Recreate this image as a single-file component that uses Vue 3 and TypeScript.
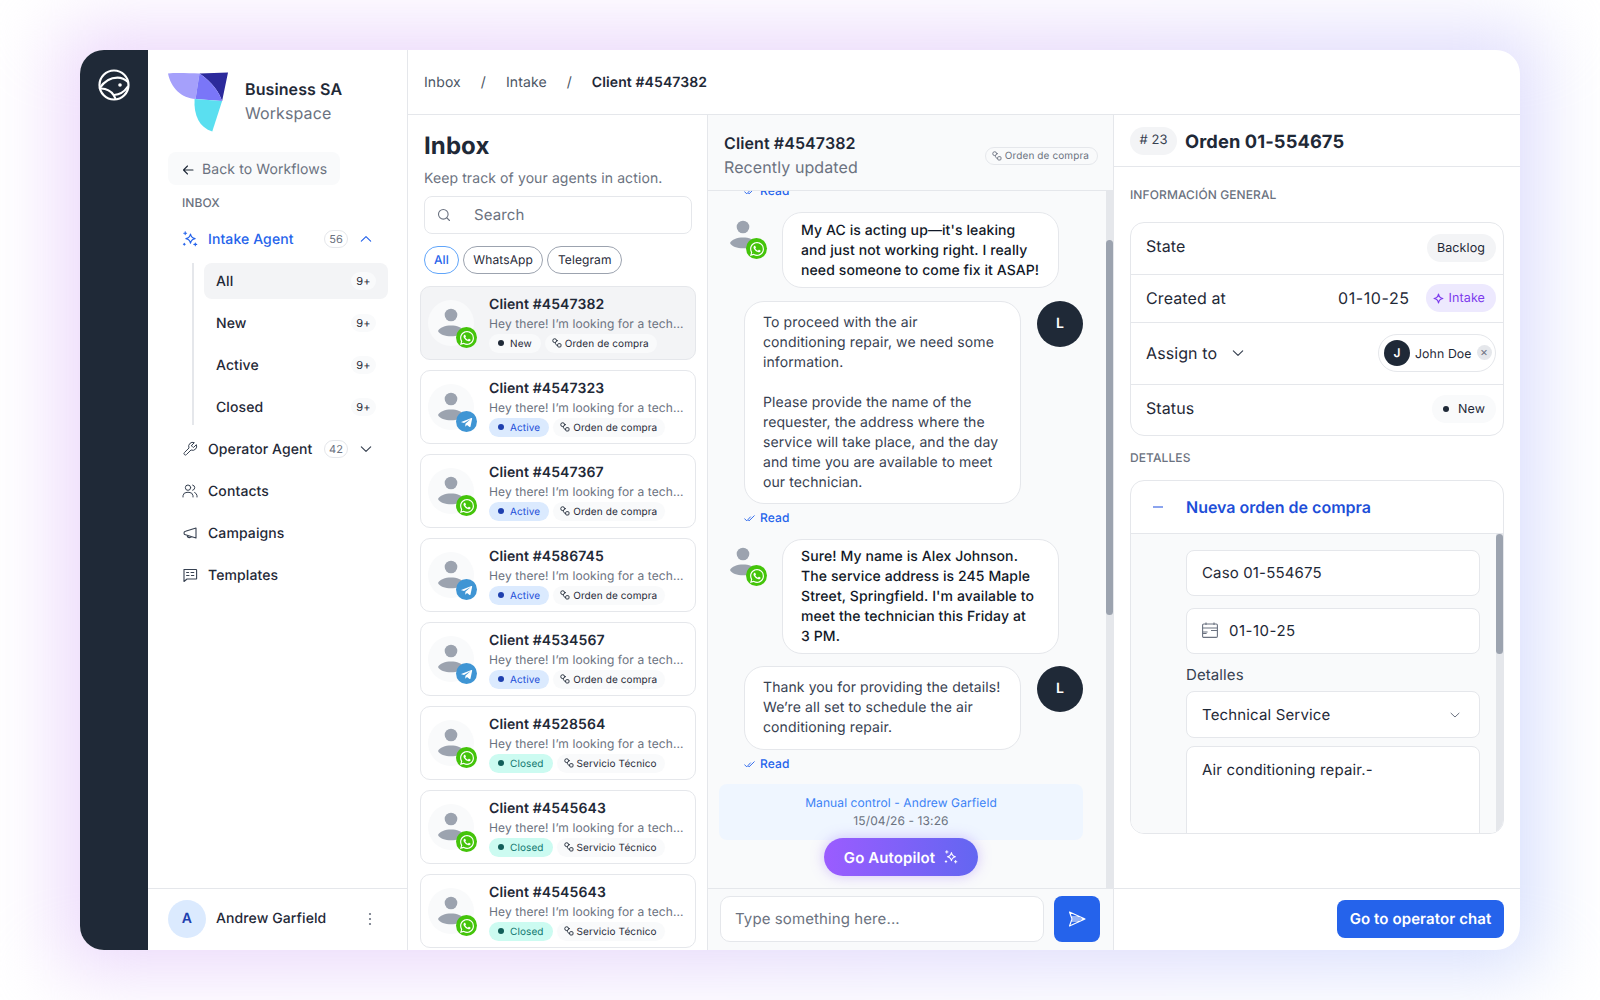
<template>
  <div class="page">
    <svg class="sprite" aria-hidden="true">
      <defs>
        <symbol id="i-wa" viewBox="0 0 24 24">
          <path fill="#fff" d="M17.472 14.382c-.297-.149-1.758-.867-2.03-.967-.273-.099-.471-.148-.67.15-.197.297-.767.966-.94 1.164-.173.199-.347.223-.644.075-.297-.15-1.255-.463-2.39-1.475-.883-.788-1.48-1.761-1.653-2.059-.173-.297-.018-.458.13-.606.134-.133.298-.347.446-.52.149-.174.198-.298.298-.497.099-.198.05-.371-.025-.52-.075-.149-.669-1.612-.916-2.207-.242-.579-.487-.5-.669-.51-.173-.008-.371-.01-.57-.01-.198 0-.52.074-.792.372-.272.297-1.04 1.016-1.04 2.479 0 1.462 1.065 2.875 1.213 3.074.149.198 2.096 3.2 5.077 4.487.709.306 1.262.489 1.694.625.712.227 1.36.195 1.871.118.571-.085 1.758-.719 2.006-1.413.248-.694.248-1.289.173-1.413-.074-.124-.272-.198-.57-.347m-5.421 7.403h-.004a9.87 9.87 0 01-5.031-1.378l-.361-.214-3.741.982.998-3.648-.235-.374a9.86 9.86 0 01-1.51-5.26c.001-5.45 4.436-9.884 9.888-9.884 2.64 0 5.122 1.03 6.988 2.898a9.825 9.825 0 012.893 6.994c-.003 5.45-4.437 9.884-9.885 9.884m8.413-18.297A11.815 11.815 0 0012.05 0C5.495 0 .16 5.335.157 11.892c0 2.096.547 4.142 1.588 5.945L.057 24l6.305-1.654a11.882 11.882 0 005.683 1.448h.005c6.554 0 11.89-5.335 11.893-11.893a11.821 11.821 0 00-3.48-8.413z" />
        </symbol>
        <symbol id="i-tg" viewBox="0 0 24 24">
          <path fill="#fff" d="M3.2 11.6 19.6 5.2c.8-.3 1.5.2 1.2 1.3L18 19.6c-.2 1-.8 1.2-1.6.8l-4.4-3.3-2.1 2.1c-.3.3-.5.4-.9.4l.3-4.5 8.2-7.4c.4-.3-.1-.5-.5-.2L6.900 13.900l-4.300-1.300c-.9-.3-.9-.7.6-1z" />
        </symbol>
        <symbol id="i-person" viewBox="0 0 46 46">
          <circle cx="23" cy="15" r="6.300" fill="#9ca3af" />
          <path fill="#9ca3af" d="M10 31c3-7.500 23-7.500 26 0-3 7-23 7-26 0z" />
        </symbol>
        <symbol id="i-flow" viewBox="0 0 12 12">
          <circle cx="3.200" cy="3.200" r="2.300" fill="none" stroke="currentColor" stroke-width="1.100" />
          <rect x="6.800" y="6.800" width="4" height="4" rx="1.200" fill="none" stroke="currentColor" stroke-width="1.100" />
          <path d="M5.400 3.200h1.800M4 5.400c0 2.200 1 3.400 2.800 3.400" fill="none" stroke="currentColor" stroke-width="1.100" />
        </symbol>
        <symbol id="i-spark" viewBox="0 0 16 16">
          <path d="M8.500 3c.5 2.800 1.800 4.100 4.600 4.600-2.800.5-4.100 1.800-4.600 4.600-.5-2.800-1.800-4.100-4.600-4.600 2.800-.5 4.100-1.800 4.600-4.600z" fill="none" stroke="currentColor" stroke-width="1.200" stroke-linejoin="round" />
          <path d="M3.200 .8v2.800M1.800 2.200h2.800M13.300 12v2.800M11.900 13.400h2.800M2.300 12.300v1.800M1.400 13.200h1.800" fill="none" stroke="currentColor" stroke-width="1.100" stroke-linecap="round" />
        </symbol>
        <symbol id="i-check" viewBox="0 0 12 12">
          <path d="M.700 6.300 3 8.600 7 4.300M5 8.200l.500.400L11.200 3" fill="none" stroke="currentColor" stroke-width="1" stroke-linecap="round" stroke-linejoin="round" />
        </symbol>
        <symbol id="i-chev" viewBox="0 0 12 12">
          <path d="M2 4.200 6 8l4-3.800" fill="none" stroke="currentColor" stroke-width="1" stroke-linecap="round" stroke-linejoin="round" />
        </symbol>
      </defs>
    </svg>

    <div class="frame">
      <aside class="rail">
        <svg class="rail__logo" viewBox="0 0 32 32" fill="none" stroke="#fff" stroke-width="2.200" stroke-linecap="round">
          <circle cx="16" cy="16" r="14.500" />
          <path d="M1.800 19C6.500 12 13 8.600 19.500 8.600c4 0 7.500 1.600 10.500 4.400" />
          <path d="M3 19.500c6 .2 10 2.500 12.500 6.500 1.500 2.400 2 3.500 2 4" />
          <path d="M16 26c6-.4 10.500-3.500 13.500-8" />
          <circle cx="22" cy="16" r="1.800" fill="#fff" stroke="none" />
        </svg>
      </aside>

      <aside class="side">
        <div class="brand">
          <svg class="brand__logo" viewBox="0 0 62 60">
            <path fill="#a5a0fb" d="M0 1C10 0 22 1 32 1L28 27C14 26 3 16 0 1z" />
            <path fill="#2c2a9c" d="M32 1 61 0 55 29C52 20 45 10 32 1z" />
            <path fill="#7a76f8" d="M32 1C45 10 52 20 55 29L28 27z" />
            <path fill="#5adff0" d="M27 27 55 29 45 60C32 56 26 44 27 27z" />
          </svg>
          <div class="brand__text">
            <div class="brand__name">Business SA</div>
            <div class="brand__sub">Workspace</div>
          </div>
        </div>

        <button class="back">
          <svg width="14" height="14" viewBox="0 0 14 14" fill="none" stroke="#1f2937" stroke-width="1.100" stroke-linecap="round" stroke-linejoin="round"><path d="M12 7H2.500M6.500 3 2.500 7l4 4" /></svg>
          Back to Workflows
        </button>
        <div class="side__label">INBOX</div>

        <div class="nav nav--on">
          <svg class="nav__icon"><use href="#i-spark" /></svg>
          <span>Intake Agent</span>
          <em class="nav__count">56</em>
          <svg class="nav__chev nav__chev--up"><use href="#i-chev" /></svg>
        </div>
        <div class="sub">
          <div v-for="s in subItems" :key="s" class="sub__row" :class="{ 'sub__row--on': s === 'All' }">
            {{ s }}<em>9+</em>
          </div>
        </div>
        <div class="nav">
          <svg class="nav__icon" viewBox="0 0 24 24" fill="none" stroke="currentColor" stroke-width="1.500" stroke-linecap="round" stroke-linejoin="round"><path d="M14.700 6.300a1 1 0 0 0 0 1.400l1.600 1.600a1 1 0 0 0 1.400 0l3.770-3.770a6 6 0 0 1-7.940 7.940l-6.910 6.910a2.120 2.120 0 0 1-3-3l6.910-6.910a6 6 0 0 1 7.940-7.940l-3.760 3.760z" /></svg>
          <span>Operator Agent</span>
          <em class="nav__count">42</em>
          <svg class="nav__chev"><use href="#i-chev" /></svg>
        </div>
        <div class="nav">
          <svg class="nav__icon" viewBox="0 0 24 24" fill="none" stroke="currentColor" stroke-width="1.500" stroke-linecap="round" stroke-linejoin="round"><circle cx="9" cy="7" r="4" /><path d="M1.500 21v-2a6 6 0 0 1 6-5h3a6 6 0 0 1 6 5v2M16 3.100a4 4 0 0 1 0 7.800M19 14.200a6 6 0 0 1 3.500 4.800v2" /></svg>
          <span>Contacts</span>
        </div>
        <div class="nav">
          <svg class="nav__icon" viewBox="0 0 16 16" fill="none" stroke="currentColor" stroke-width="1.100" stroke-linecap="round" stroke-linejoin="round"><path d="M14 3 3.500 6.200a1.800 1.800 0 0 0-1.500 1.800c0 1 .6 1.700 1.500 1.800L14 13V3zM5.200 10.300c0 1.500.8 2.300 2.200 2.300 1 0 1.500-.4 1.800-1" /></svg>
          <span>Campaigns</span>
        </div>
        <div class="nav">
          <svg class="nav__icon" viewBox="0 0 16 16" fill="none" stroke="currentColor" stroke-width="1.100" stroke-linecap="round" stroke-linejoin="round"><path d="M2 2.500h12a.6.6 0 0 1 .6.6v8.300a.6.6 0 0 1-.6.6H5l-3 2.500V3.100a.6.6 0 0 1 0-.6z" /><path d="M4.600 5.500h2M9 5.500h2.800M4.600 8.500h2.400M9.400 8.500h2.400" /></svg>
          <span>Templates</span>
        </div>

        <div class="me">
          <div class="me__avatar">A</div>
          <span class="me__name">Andrew Garfield</span>
          <svg class="me__dots" width="4" height="14" viewBox="0 0 4 14" fill="#6b7280"><circle cx="2" cy="2" r="1.100" /><circle cx="2" cy="7" r="1.100" /><circle cx="2" cy="12" r="1.100" /></svg>
        </div>
      </aside>

      <main class="main">
        <nav class="crumbs">
          <span>Inbox</span><i>/</i><span>Intake</span><i>/</i><b>Client #4547382</b>
        </nav>

        <div class="panes">
          <section class="inbox">
            <h1>Inbox</h1>
            <p>Keep track of your agents in action.</p>
            <div class="search">
              <svg width="14" height="14" viewBox="0 0 14 14" fill="none" stroke="#6b7280" stroke-width="1.100" stroke-linecap="round"><circle cx="6.300" cy="6.300" r="4.800" /><path d="m10 10 2.500 2.500" /></svg>
              <span>Search</span>
            </div>
            <div class="chips">
              <span class="chip chip--on">All</span>
              <span class="chip">WhatsApp</span>
              <span class="chip">Telegram</span>
            </div>
            <div class="cards">
              <article v-for="(c, i) in clients" :key="i" class="card" :class="{ 'card--on': i === 0 }">
                <div class="who who--bg">
                  <svg class="who__person"><use href="#i-person" /></svg>
                  <span class="who__badge" :class="`who__badge--${c.channel}`">
                    <svg><use :href="`#i-${c.channel}`" /></svg>
                  </span>
                </div>
                <div class="card__body">
                  <div class="card__title">Client #{{ c.id }}</div>
                  <div class="card__text">Hey there! I’m looking for a tech...</div>
                  <div class="card__tags">
                    <span class="tag" :class="`tag--${c.status.toLowerCase()}`"><i />{{ c.status }}</span>
                    <span class="tag tag--flow"><svg><use href="#i-flow" /></svg>{{ c.kind }}</span>
                  </div>
                </div>
              </article>
            </div>
          </section>

          <section class="chat">
            <header class="chat__head">
              <div>
                <h2>Client #4547382</h2>
                <p>Recently updated</p>
              </div>
              <span class="chat__kind"><svg><use href="#i-flow" /></svg>Orden de compra</span>
            </header>

            <div class="chat__scroll">
              <div class="read read--top"><svg><use href="#i-check" /></svg>Read</div>

              <div class="msg msg--client">
                <div class="who">
                  <svg class="who__person"><use href="#i-person" /></svg>
                  <span class="who__badge who__badge--wa"><svg><use href="#i-wa" /></svg></span>
                </div>
                <div class="bubble bubble--client">My AC is acting up—it's leaking and just not working right. I really need someone to come fix it ASAP!</div>
              </div>

              <div class="msg msg--agent msg--gap13">
                <div class="bubble">To proceed with the air conditioning repair, we need some information.<br /><br />Please provide the name of the requester, the address where the service will take place, and the day and time you are available to meet our technician.</div>
                <div class="agent">L</div>
              </div>
              <div class="read"><svg><use href="#i-check" /></svg>Read</div>

              <div class="msg msg--client">
                <div class="who">
                  <svg class="who__person"><use href="#i-person" /></svg>
                  <span class="who__badge who__badge--wa"><svg><use href="#i-wa" /></svg></span>
                </div>
                <div class="bubble bubble--client bubble--tight">Sure! My name is Alex Johnson. The service address is 245 Maple Street, Springfield. I'm available to meet the technician this Friday at 3&nbsp;PM.</div>
              </div>

              <div class="msg msg--agent msg--gap12">
                <div class="bubble bubble--last">Thank you for providing the details! We’re all set to schedule the air conditioning repair.</div>
                <div class="agent">L</div>
              </div>
              <div class="read"><svg><use href="#i-check" /></svg>Read</div>

              <div class="manual">
                <div>Manual control - Andrew Garfield</div>
                <small>15/04/26 - 13:26</small>
              </div>
              <button class="auto">Go Autopilot <svg><use href="#i-spark" /></svg></button>
            </div>
            <div class="bar bar--chat"><span /></div>

            <footer class="chat__foot">
              <div class="composer">Type something here...</div>
              <button class="send">
                <svg width="20" height="20" viewBox="0 0 20 20" fill="none" stroke="#fff" stroke-width="1.100" stroke-linejoin="round"><path d="M2.500 3 18 10 2.500 17 5 10zM5 10h13M4.300 8h9M4.300 12h9" /></svg>
              </button>
            </footer>
          </section>

          <section class="order">
            <header class="order__head">
              <span class="order__num"># 23</span>
              <h2>Orden 01-554675</h2>
            </header>

            <div class="order__body">
              <div class="label label--first">INFORMACIÓN GENERAL</div>
              <div class="info">
                <div class="info__row info__row--a">
                  <span class="info__key info__key--up2">State</span>
                  <span class="pill">Backlog</span>
                </div>
                <div class="info__row info__row--b">
                  <span class="info__key">Created at</span>
                  <span class="info__date">01-10-25</span>
                  <span class="pill pill--violet">
                    <svg width="11" height="11" viewBox="0 0 12 12" fill="none" stroke="currentColor" stroke-width="1.300" stroke-linejoin="round"><path d="M6 1.200c.5 3 1.800 4.300 4.800 4.800-3 .5-4.300 1.800-4.800 4.800-.5-3-1.800-4.300-4.800-4.800 3-.5 4.300-1.800 4.800-4.800z" /></svg>
                    Intake
                  </span>
                </div>
                <div class="info__row info__row--c">
                  <span class="info__key">Assign to</span>
                  <svg class="info__chev"><use href="#i-chev" /></svg>
                  <span class="person">
                    <span class="person__pic">J</span>
                    <span class="person__name">John Doe</span>
                    <span class="person__x">×</span>
                  </span>
                </div>
                <div class="info__row info__row--d">
                  <span class="info__key info__key--up1">Status</span>
                  <span class="pill pill--dot"><i />New</span>
                </div>
              </div>

              <div class="label">DETALLES</div>
              <div class="acc">
                <div class="acc__head">
                  <i class="acc__minus" />
                  <span>Nueva orden de compra</span>
                </div>
                <div class="acc__body">
                  <div class="field field--up">Caso 01-554675</div>
                  <div class="field field--up field--date">
                    <svg width="16" height="16" viewBox="0 0 16 16" fill="none" stroke="#6b7280" stroke-width="1.100"><rect x=".6" y="2" width="14.800" height="13.400" rx="1.200" /><path d="M4 .4v2.500M12 .4v2.500M.6 6h14.800M.6 10h5M9 8.500h6.400M.6 11.500h4" /></svg>
                    01-10-25
                  </div>
                  <div class="acc__label">Detalles</div>
                  <div class="field field--select">
                    Technical Service
                    <svg><use href="#i-chev" /></svg>
                  </div>
                  <div class="field field--area">Air conditioning repair.-</div>
                  <div class="bar bar--acc"><span /></div>
                </div>
              </div>
            </div>

            <footer class="order__foot">
              <button class="go">Go to operator chat</button>
            </footer>
          </section>
        </div>
      </main>
    </div>
  </div>
</template>

<script setup lang="ts">
interface Client {
  id: number
  channel: 'wa' | 'tg'
  status: 'New' | 'Active' | 'Closed'
  kind: string
}

const subItems = ['All', 'New', 'Active', 'Closed']

const clients: Client[] = [
  { id: 4547382, channel: 'wa', status: 'New', kind: 'Orden de compra' },
  { id: 4547323, channel: 'tg', status: 'Active', kind: 'Orden de compra' },
  { id: 4547367, channel: 'wa', status: 'Active', kind: 'Orden de compra' },
  { id: 4586745, channel: 'tg', status: 'Active', kind: 'Orden de compra' },
  { id: 4534567, channel: 'tg', status: 'Active', kind: 'Orden de compra' },
  { id: 4528564, channel: 'wa', status: 'Closed', kind: 'Servicio Técnico' },
  { id: 4545643, channel: 'wa', status: 'Closed', kind: 'Servicio Técnico' },
  { id: 4545643, channel: 'wa', status: 'Closed', kind: 'Servicio Técnico' },
]
</script>

<style>
body {
  margin: 0;
  background: #fff;
}
</style>

<style scoped>
* {
  box-sizing: border-box;
}

.page {
  position: relative;
  height: 1000px;
  padding: 50px 80px;
  overflow: hidden;
  font-family: Inter, 'Liberation Sans', sans-serif;
  color: #1f2937;
  letter-spacing: .1px;
  text-rendering: geometricPrecision;
  background: #fff;
}

.page::before {
  position: absolute;
  inset: 30px 60px;
  content: '';
  background: linear-gradient(115deg, #ecd8fb 0%, #ead9fb 45%, #d6e0fd 100%);
  filter: blur(36px);
}

.sprite {
  position: absolute;
  width: 0;
  height: 0;
}

.frame {
  position: relative;
  display: grid;
  grid-template-columns: 68px 260px 1fr;
  height: 900px;
  overflow: hidden;
  background: #fff;
  border-radius: 24px;
}

.rail {
  padding: 19px 18px;
  background: #1f2937;
}

.rail__logo {
  display: block;
  width: 32px;
  height: 32px;
}

.side {
  display: flex;
  flex-direction: column;
  padding-top: 22px;
  border-right: 1px solid #e5e7eb;
}

.brand {
  display: flex;
  gap: 16px;
  align-items: center;
  height: 60px;
  padding-left: 20px;
  font-size: 16px;
  line-height: 24px;
}

.brand__text {
  margin-bottom: 2px;
}

.brand__logo {
  width: 61px;
  height: 60px;
}

.brand__name {
  font-weight: 600;
}

.brand__sub {
  color: #6b7280;
}

.back {
  display: flex;
  gap: 7px;
  align-items: center;
  align-self: flex-start;
  height: 33px;
  padding: 2px 13px 0;
  margin: 20px 0 0 20px;
  font: 400 14px Inter, sans-serif;
  color: #6b7280;
  letter-spacing: .1px;
  text-rendering: geometricPrecision;
  background: #f9fafb;
  border: 0;
  border-radius: 8px;
}

.side__label {
  height: 33px;
  padding: 10px 0 0 34px;
  font-size: 12px;
  font-weight: 500;
  line-height: 16px;
  color: #6b7280;
}

.nav {
  display: flex;
  align-items: center;
  height: 42px;
  padding: 0 34px;
  font-size: 14px;
  font-weight: 500;
  color: #1f2937;
}

.nav--on {
  color: #2563eb;
}

.nav__icon {
  flex: none;
  width: 16px;
  height: 16px;
  margin-right: 10px;
  color: #374151;
}

.nav--on .nav__icon {
  color: #2563eb;
}

.nav__count {
  width: 24px;
  height: 18px;
  margin-left: auto;
  font-size: 11px;
  font-style: normal;
  font-weight: 400;
  line-height: 16px;
  color: #6b7280;
  text-align: center;
  border: 1px solid #e5e7eb;
  border-radius: 9px;
}

.nav__chev {
  flex: none;
  width: 14px;
  height: 14px;
  margin-left: 11px;
  color: #374151;
}

.nav__chev--up {
  color: #2563eb;
  transform: rotate(180deg);
}

.sub {
  display: flex;
  flex-direction: column;
  gap: 6px;
  padding-left: 10px;
  margin: 3px 19px 3px 44px;
  border-left: 2px solid #e5e7eb;
}

.sub__row {
  display: flex;
  align-items: center;
  justify-content: space-between;
  height: 36px;
  padding: 0 12px;
  font-size: 14px;
  font-weight: 500;
  border-radius: 8px;
}

.sub__row--on {
  background: #f3f4f6;
}

.sub__row em {
  width: 25px;
  height: 18px;
  font-size: 11px;
  font-style: normal;
  font-weight: 400;
  line-height: 18px;
  text-align: center;
  background: #f9fafb;
  border-radius: 9px;
}

.me {
  display: flex;
  gap: 10px;
  align-items: center;
  height: 62px;
  padding: 0 35px 2px 20px;
  margin-top: auto;
  border-top: 1px solid #e5e7eb;
}

.me__avatar {
  width: 38px;
  height: 38px;
  font-size: 14px;
  font-weight: 600;
  line-height: 38px;
  color: #1e40af;
  text-align: center;
  background: #dbeafe;
  border-radius: 50%;
}

.me__name {
  font-size: 14px;
  font-weight: 500;
}

.me__dots {
  margin-left: auto;
}

.main {
  display: flex;
  flex-direction: column;
  min-width: 0;
}

.crumbs {
  display: flex;
  gap: 20px;
  align-items: center;
  height: 65px;
  padding-left: 16px;
  font-size: 14px;
  color: #4b5563;
  border-bottom: 1px solid #e5e7eb;
}

.crumbs i {
  font-style: normal;
}

.crumbs b {
  font-weight: 600;
  color: #1f2937;
}

.panes {
  display: grid;
  flex: 1;
  grid-template-columns: 300px 406px 406px;
  min-height: 0;
}

.inbox {
  display: flex;
  flex-direction: column;
  min-height: 0;
  border-right: 1px solid #e5e7eb;
}

.inbox h1 {
  margin: 15px 0 0 16px;
  font-size: 24px;
  font-weight: 700;
  line-height: 32px;
}

.inbox p {
  margin: 7px 0 0 16px;
  font-size: 14px;
  line-height: 20px;
  color: #6b7280;
}

.search {
  display: flex;
  align-items: center;
  width: 268px;
  height: 38px;
  padding: 0 0 1px 12px;
  margin: 7px 0 0 16px;
  font-size: 15px;
  color: #6b7280;
  border: 1px solid #e5e7eb;
  border-radius: 8px;
}

.search span {
  margin-left: 23px;
}

.chips {
  display: flex;
  gap: 4px;
  margin: 12px 0 0 16px;
}

.chip {
  height: 28px;
  padding: 0 9.500px;
  font-size: 12px;
  line-height: 26px;
  border: 1px solid #9ca3af;
  border-radius: 14px;
}

.chip--on {
  padding: 0 9px;
  font-weight: 500;
  color: #2563eb;
  border-color: #60a5fa;
}

.cards {
  display: flex;
  flex: 1;
  flex-direction: column;
  gap: 10px;
  min-height: 0;
  padding: 0 11px 0 12px;
  margin-top: 12px;
  overflow: hidden;
}

.card {
  display: flex;
  flex: none;
  gap: 15px;
  align-items: center;
  height: 74px;
  padding-left: 7px;
  border: 1px solid #e5e7eb;
  border-radius: 10px;
}

.card--on {
  background: #f3f4f6;
}

.who {
  position: relative;
  flex: none;
  width: 46px;
  height: 46px;
}

.who--bg {
  background: #f9fafb;
  border-radius: 50%;
}

.who__person {
  display: block;
  width: 46px;
  height: 46px;
}

.who__badge {
  position: absolute;
  top: 27px;
  left: 28px;
  display: flex;
  align-items: center;
  justify-content: center;
  width: 21px;
  height: 21px;
  border-radius: 50%;
}

.msg .who__badge {
  top: 26px;
  left: 26px;
}

.who__badge svg {
  width: 14px;
  height: 14px;
}

.who__badge--wa {
  background: #44c40a;
}

.who__badge--tg {
  background: #3f95d4;
}

.card__body {
  width: 193px;
  min-width: 0;
}

.card__title {
  margin-top: 1px;
  font-size: 14px;
  font-weight: 600;
  line-height: 20px;
}

.card__text {
  margin-top: 1px;
  font-size: 12px;
  line-height: 16px;
  color: #6b7280;
  white-space: nowrap;
}

.card__tags {
  display: flex;
  gap: 4px;
  margin-top: 2px;
}

.tag {
  display: inline-flex;
  gap: 5px;
  align-items: center;
  height: 19px;
  padding: 2px 9px 0;
  font-size: 10px;
  line-height: 1;
  background: #f9fafb;
  border-radius: 10px;
}

.tag i {
  width: 6px;
  height: 6px;
  margin-top: -2px;
  background: currentColor;
  border-radius: 50%;
}

.tag--active,
.tag--new,
.tag--closed {
  gap: 6px;
}

.tag--active {
  color: #1d4ed8;
  background: #dbeafe;
}

.tag--active i {
  background: #1e40af;
}

.tag--closed {
  color: #0f766e;
  background: #ccfbf1;
}

.tag--closed i {
  background: #115e59;
}

.tag--flow {
  gap: 3px;
  padding: 2px 8px 0 7px;
}

.tag--flow svg {
  width: 10px;
  height: 10px;
  margin-top: -2px;
}

.chat {
  position: relative;
  display: flex;
  flex-direction: column;
  min-height: 0;
  background: #f9fafb;
  border-right: 1px solid #e5e7eb;
}

.chat__head {
  display: flex;
  flex: none;
  align-items: center;
  justify-content: space-between;
  height: 76px;
  padding: 4px 15px 0 16px;
  border-bottom: 1px solid #e5e7eb;
}

.chat__head h2 {
  margin: 0;
  font-size: 16px;
  font-weight: 600;
  line-height: 24px;
}

.chat__head p {
  margin: 0;
  font-size: 16px;
  line-height: 24px;
  color: #6b7280;
}

.chat__kind {
  display: inline-flex;
  gap: 3px;
  align-items: center;
  height: 18px;
  padding: 0 8px 0 6px;
  margin-top: 2px;
  font-size: 10px;
  color: #6b7280;
  border: 1px solid #e5e7eb;
  border-radius: 9px;
}

.chat__kind svg {
  width: 10px;
  height: 10px;
}

.chat__scroll {
  display: flex;
  flex: 1;
  flex-direction: column;
  min-height: 0;
  padding: 0 30px 0 11px;
  overflow: hidden;
}

.bar {
  position: absolute;
  right: 0;
  width: 7px;
  background: #e5e7eb;
}

.bar span {
  display: block;
  width: 7px;
  background: #9ca3af;
  border-radius: 4px;
}

.bar--chat {
  top: 76px;
  bottom: 62px;
}

.bar--chat span {
  height: 375px;
  margin-top: 49px;
}

.read {
  display: flex;
  flex: none;
  gap: 5px;
  align-items: center;
  height: 14px;
  padding-left: 25px;
  margin-top: 7px;
  font-size: 12px;
  font-weight: 500;
  line-height: 14px;
  color: #2563eb;
}

.read svg {
  width: 11px;
  height: 11px;
}

.read--top {
  margin-top: -7px;
}

.msg {
  display: flex;
  flex: none;
  gap: 16px;
  margin-top: 14px;
}

.msg--client {
  padding-left: 1px;
}

.msg--agent {
  padding-left: 25px;
}

.msg--gap12 {
  margin-top: 12px;
}

.msg--gap13 {
  margin-top: 13px;
}

.bubble {
  width: 277px;
  padding: 11px 19px 10px 18px;
  font-size: 14px;
  line-height: 20px;
  color: #374151;
  background: #fff;
  border: 1px solid #e5e7eb;
  border-radius: 20px;
}

.bubble--client {
  padding: 8px 18px 6px;
  font-weight: 500;
  color: #111827;
}

.bubble--tight {
  padding: 7px 18px 6px;
}

.bubble--last {
  padding-bottom: 11px;
}

.agent {
  flex: none;
  width: 46px;
  height: 46px;
  font-size: 14px;
  font-weight: 600;
  line-height: 46px;
  color: #fff;
  text-align: center;
  background: #1f2937;
  border-radius: 50%;
}

.manual {
  flex: none;
  height: 56px;
  padding-top: 10px;
  margin-top: 13px;
  font-size: 12px;
  line-height: 18px;
  color: #3b82f6;
  text-align: center;
  background: #eff6ff;
  border-radius: 8px;
}

.manual small {
  display: block;
  font-size: 12px;
  color: #6b7280;
}

.auto {
  display: flex;
  flex: none;
  gap: 9px;
  align-items: center;
  align-self: center;
  justify-content: center;
  width: 154px;
  height: 38px;
  margin-top: -2px;
  font: 600 15px Inter, sans-serif;
  color: #fff;
  letter-spacing: .1px;
  text-rendering: geometricPrecision;
  background: linear-gradient(90deg, #9b5cff, #6366f1);
  border: 0;
  border-radius: 19px;
  box-shadow: 0 0 14px rgb(139 92 246 / 35%);
}

.auto svg {
  width: 14px;
  height: 14px;
}

.chat__foot {
  display: flex;
  flex: none;
  gap: 10px;
  align-items: center;
  height: 62px;
  padding: 0 13px 2px 12px;
  border-top: 1px solid #e5e7eb;
}

.composer {
  flex: 1;
  height: 46px;
  padding-left: 14px;
  font-size: 15px;
  line-height: 43px;
  color: #6b7280;
  background: #fff;
  border: 1px solid #e5e7eb;
  border-radius: 10px;
}

.send {
  display: flex;
  flex: none;
  align-items: center;
  justify-content: center;
  width: 46px;
  height: 46px;
  background: #2563eb;
  border: 0;
  border-radius: 8px;
}

.order {
  display: flex;
  flex-direction: column;
  min-height: 0;
}

.order__head {
  display: flex;
  flex: none;
  gap: 8px;
  align-items: center;
  height: 52px;
  padding-left: 16px;
  border-bottom: 1px solid #e5e7eb;
}

.order__num {
  width: 47px;
  height: 28px;
  font-size: 13px;
  line-height: 26px;
  color: #374151;
  text-align: center;
  background: #f3f4f6;
  border-radius: 14px;
}

.order__head h2 {
  margin: 3px 0 0;
  font-size: 18.300px;
  font-weight: 700;
}

.order__body {
  flex: 1;
  min-height: 0;
  padding: 0 16px;
}

.label {
  margin-top: 14px;
  font-size: 12px;
  font-weight: 500;
  line-height: 16px;
  color: #6b7280;
}

.label--first {
  margin-top: 20px;
}

.info {
  margin-top: 19px;
  border: 1px solid #e5e7eb;
  border-radius: 14px;
}

.info__row {
  display: flex;
  align-items: center;
  justify-content: space-between;
  padding: 0 7px 2px 15px;
  font-size: 16px;
  border-bottom: 1px solid #e5e7eb;
}

.info__row--a {
  height: 52px;
}

.info__row--b {
  height: 48px;
}

.info__row--c {
  height: 62px;
}

.info__row--d {
  height: 50px;
  border-bottom: 0;
}

.info__key--up2 {
  margin-bottom: 4px;
}

.info__key--up1 {
  margin-bottom: 2px;
}

.info__date {
  margin: 0 16px 0 auto;
  letter-spacing: .6px;
}

.info__chev {
  width: 14px;
  height: 14px;
  margin: 0 auto 0 14px;
  color: #374151;
}

.pill {
  display: inline-flex;
  gap: 5px;
  align-items: center;
  height: 28px;
  padding: 1px 11px 0 10px;
  font-size: 12.500px;
  color: #1f2937;
  background: #f3f4f6;
  border-radius: 14px;
}

.pill--violet {
  padding: 1px 11px 0 7px;
  color: #7c3aed;
  background: #ede9fe;
}

.pill--dot {
  gap: 9px;
  padding: 0 11px;
  background: #f9fafb;
}

.pill--dot i {
  width: 6px;
  height: 6px;
  background: #1f2937;
  border-radius: 50%;
}

.person {
  display: inline-flex;
  gap: 5px;
  align-items: center;
  width: 118px;
  height: 38px;
  padding: 0 9px 0 5px;
  font-size: 12.300px;
  white-space: nowrap;
  border: 1px solid #e5e7eb;
  border-radius: 19px;
}

.person__name {
  margin-top: 2px;
}

.person__pic {
  flex: none;
  width: 26px;
  height: 26px;
  font-size: 12px;
  font-weight: 600;
  line-height: 26px;
  color: #fff;
  text-align: center;
  background: #1f2937;
  border-radius: 50%;
}

.person__x {
  flex: none;
  width: 15px;
  height: 15px;
  margin-left: auto;
  font-size: 12px;
  line-height: 14px;
  color: #6b7280;
  text-align: center;
  background: #e5e7eb;
  border-radius: 50%;
}

.acc {
  height: 354px;
  margin-top: 14px;
  overflow: hidden;
  border: 1px solid #e5e7eb;
  border-radius: 14px;
}

.acc__head {
  display: flex;
  align-items: center;
  height: 53px;
  padding-left: 22px;
  font-size: 16px;
  font-weight: 600;
  color: #1d4ed8;
  letter-spacing: 0;
  border-bottom: 1px solid #e5e7eb;
}

.acc__minus {
  width: 10px;
  height: 2px;
  margin-right: 23px;
  background: #8ba4ee;
}

.acc__body {
  position: relative;
  height: 300px;
  padding: 16px 23px 0 55px;
  overflow: hidden;
  background: #f9fafb;
}

.field {
  display: flex;
  align-items: center;
  height: 46px;
  padding: 0 15px;
  margin-bottom: 12px;
  font-size: 15px;
  color: #1f2937;
  letter-spacing: .15px;
  background: #fff;
  border: 1px solid #e5e7eb;
  border-radius: 8px;
}

.field--up {
  padding-bottom: 2px;
}

.field--date {
  gap: 11px;
  margin-bottom: 0;
  letter-spacing: .5px;
}

.acc__label {
  margin: 11px 0 6px;
  font-size: 15px;
  line-height: 20px;
  color: #374151;
}

.field--select {
  justify-content: space-between;
  height: 47px;
  margin-bottom: 8px;
}

.field--select svg {
  width: 12px;
  height: 12px;
  margin-right: 3px;
  color: #6b7280;
}

.field--area {
  align-items: flex-start;
  height: 120px;
  padding-top: 13px;
  line-height: 20px;
}

.bar--acc {
  top: 0;
  bottom: 0;
}

.bar--acc span {
  height: 120px;
}

.order__foot {
  display: flex;
  flex: none;
  align-items: center;
  justify-content: flex-end;
  height: 62px;
  padding: 0 16px 2px 0;
  border-top: 1px solid #e5e7eb;
}

.go {
  width: 167px;
  height: 38px;
  font: 600 15px Inter, sans-serif;
  color: #fff;
  letter-spacing: .1px;
  text-rendering: geometricPrecision;
  background: #2563eb;
  border: 0;
  border-radius: 8px;
}
</style>
